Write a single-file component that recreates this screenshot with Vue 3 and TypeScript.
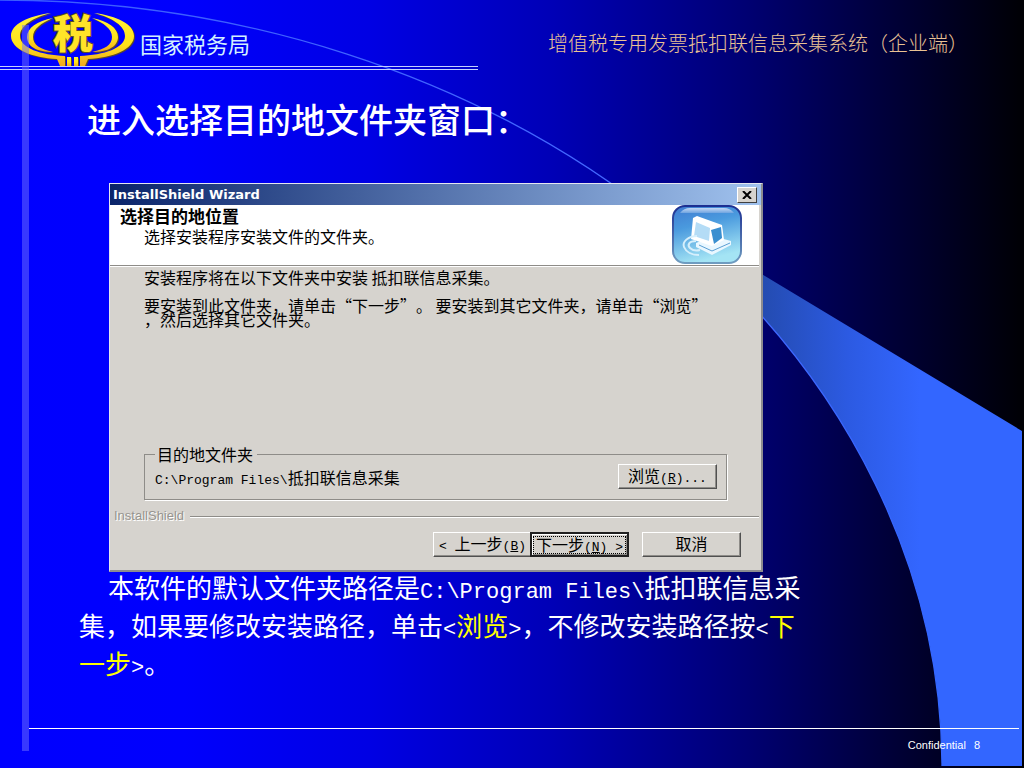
<script setup lang="ts">
import { ref } from 'vue'

const folder = ref({ drive: 'C:\\Program Files\\', name: '抵扣联信息采集' })
const page = 8
</script>

<template>
  <div class="slide" lang="zh-CN">
    <svg class="backdrop" viewBox="0 0 1024 768" preserveAspectRatio="none" aria-hidden="true">
      <defs>
        <linearGradient id="wedge" gradientUnits="userSpaceOnUse" x1="740" y1="0" x2="920" y2="0">
          <stop offset="0" stop-color="#2248a4" />
          <stop offset="0.6" stop-color="#2c5ae2" />
          <stop offset="1" stop-color="#3366ff" />
        </linearGradient>
        <linearGradient id="arc" gradientUnits="userSpaceOnUse" x1="0" y1="0" x2="942" y2="0">
          <stop offset="0" stop-color="#3a5cff" />
          <stop offset="0.7" stop-color="#4468ff" />
          <stop offset="1" stop-color="#3366ff" />
        </linearGradient>
      </defs>
      <path d="M700 237 L1022 431 V766 H942 A942 768 0 0 0 700 254 Z" fill="url(#wedge)" />
      <path d="M0 0 A942 768 0 0 1 942 766" fill="none" stroke="url(#arc)" stroke-width="1.3" />
    </svg>

    <header class="top">
      <svg class="logo" viewBox="0 0 126 58" role="img" aria-label="税务徽标">
        <defs>
          <linearGradient id="gold" x1="0" y1="0" x2="0" y2="1">
            <stop offset="0" stop-color="#fff23c" />
            <stop offset="0.6" stop-color="#ffe21a" />
            <stop offset="1" stop-color="#f0a820" />
          </linearGradient>
          <g id="half">
            <path d="M41 4 C18 7 1 15 1 27 C1 40 22 49 47 50 L50 57 H55 V47 C31 46 10 39 10 27 C10 17 22 9 41 4 Z" />
            <path d="M43 9 C27 12 17 19 17 28 C17 38 28 43 43 43 C30 40 23 36 23 28 C23 20 31 14 43 9 Z" />
            <path d="M57 48 H61 V57 H57 Z" />
          </g>
        </defs>
        <g fill="#5d4a28" transform="translate(1 1)">
          <use href="#half" />
          <use href="#half" transform="translate(125 0) scale(-1 1)" />
        </g>
        <g fill="url(#gold)">
          <use href="#half" />
          <use href="#half" transform="translate(125 0) scale(-1 1)" />
        </g>
        <text class="logo-char" x="63" y="39" text-anchor="middle">税</text>
      </svg>
      <span class="bureau">国家税务局</span>
      <span class="system">增值税专用发票抵扣联信息采集系统（企业端）</span>
    </header>
    <div class="rule"></div>
    <div class="stripe"></div>

    <main class="content">
      <h1>进入选择目的地文件夹窗口：</h1>

      <section class="dialog" aria-label="InstallShield Wizard">
        <div class="titlebar">
          <span>InstallShield Wizard</span>
          <button class="close" type="button" aria-label="关闭">
            <svg viewBox="0 0 10 8" aria-hidden="true"><path d="M1 0 L9 8 M9 0 L1 8" stroke="#000" stroke-width="2" /></svg>
          </button>
        </div>
        <div class="banner">
          <div>
            <h2>选择目的地位置</h2>
            <p>选择安装程序安装文件的文件夹。</p>
          </div>
          <svg class="setup" viewBox="0 0 70 60" aria-hidden="true">
            <defs>
              <linearGradient id="tile" x1="0" y1="0" x2="0.3" y2="1">
                <stop offset="0" stop-color="#3f7ad0" />
                <stop offset="0.4" stop-color="#4a9ade" />
                <stop offset="1" stop-color="#a4e4f4" />
              </linearGradient>
              <linearGradient id="edge" x1="0" y1="0" x2="0" y2="1">
                <stop offset="0" stop-color="#1c2f92" />
                <stop offset="1" stop-color="#6f9cc0" />
              </linearGradient>
              <linearGradient id="gloss" x1="0" y1="0" x2="0" y2="1">
                <stop offset="0" stop-color="#c4d8f4" />
                <stop offset="1" stop-color="#6fa4e0" />
              </linearGradient>
            </defs>
            <rect x="1" y="1" width="68" height="57" rx="12" fill="url(#tile)" stroke="url(#edge)" stroke-width="2" />
            <path d="M8 8 Q12 3 18 3 H52 Q58 3 62 8 Z" fill="url(#gloss)" />
            <path d="M24 38 L41 31 L59 36 V40 L40 50 L24 42 Z" fill="#e9f7ff" />
            <path d="M40 46 L58 38 M27 40 L40 46" stroke="#5a9fd4" stroke-width="1" fill="none" />
            <path d="M21 13 L25 11 L50 20 L52 35 L40 41 L19 34 Z" fill="#fff" />
            <path d="M24 17 L38 23 L37 36 L22 31 Z" fill="#b4dcf6" />
            <path d="M39 25 L49 22 L50 33 L42 39 Z" fill="#3a8fd0" />
            <path d="M25 31 C16 31 10 37 12 42 C14 47 20 50 27 50 M24 36 C17 36 15 40 18 43 C20 45 24 46 28 45" fill="none" stroke="#d6effc" stroke-width="2" />
          </svg>
        </div>
        <div class="body">
          <p class="lead">安装程序将在以下文件夹中安装 抵扣联信息采集。</p>
          <p class="explain">要安装到此文件夹，请单击“下一步”。 要安装到其它文件夹，请单击“浏览”<br />，然后选择其它文件夹。</p>
          <fieldset>
            <legend>目的地文件夹</legend>
            <div class="path"><span class="mono">{{ folder.drive }}</span>{{ folder.name }}</div>
            <button class="btn" type="button">浏览<span class="mono">(<u>R</u>)...</span></button>
          </fieldset>
          <div class="brand"><span>InstallShield</span><i></i></div>
          <div class="actions">
            <button class="btn" type="button"><span class="mono">&lt;&nbsp;</span>上一步<span class="mono">(<u>B</u>)</span></button>
            <button class="btn primary" type="button"><span class="focus">下一步<span class="mono">(<u>N</u>)&nbsp;&gt;</span></span></button>
            <button class="btn cancel" type="button">取消</button>
          </div>
        </div>
      </section>

      <p class="note">
        本软件的默认文件夹路径是<span class="code">{{ folder.drive }}</span>抵扣联信息采<br />集，如果要修改安装路径，单击<span class="code">&lt;</span><em>浏览</em><span class="code">&gt;</span>，不修改安装路径按<span class="code">&lt;</span><em>下<br />一步</em><span class="code">&gt;</span>。
      </p>
    </main>

    <footer>
      <span>Confidential</span>
      <span>{{ page }}</span>
    </footer>
  </div>
</template>

<style>
body {
  margin: 0;
  background: #000;
}
</style>

<style scoped>
.slide {
  position: relative;
  box-sizing: border-box;
  min-height: 100vh;
  display: flex;
  flex-direction: column;
  overflow: hidden;
  color: #fff;
  font-family: "Noto Sans CJK SC", "Liberation Sans", sans-serif;
  text-spacing-trim: space-all;
  background: linear-gradient(90deg, #0000ff 0%, #0000fd 18%, #0000e4 36%, #0000b6 54%, #000072 73%, #000038 87%, #000004 100%);
}
h1, h2, p, fieldset, legend {
  margin: 0;
  padding: 0;
  font-weight: 400;
}
.backdrop {
  position: absolute;
  inset: 0;
  width: 100%;
  height: 100%;
}
.top {
  position: relative;
  display: flex;
  align-items: center;
  box-sizing: border-box;
  height: 66px;
  padding: 20px 56px 0 10px;
}
.logo {
  width: 126px;
  height: 58px;
  margin-top: -10px;
  flex: none;
  overflow: visible;
}
.logo-char {
  font: 900 40px "Noto Sans CJK SC", sans-serif;
  fill: #ffe428;
  stroke: #5d4a28;
  stroke-width: 2;
  paint-order: stroke;
}
.bureau {
  margin-left: 4px;
  font-size: 22px;
  line-height: 30px;
  color: #d4f0ff;
}
.system {
  margin-left: auto;
  font-size: 20px;
  line-height: 30px;
  font-weight: 300;
  color: #eac294;
}
.rule {
  position: relative;
  width: 478px;
  height: 2px;
  border-top: 1px solid #c4d0ff;
  border-bottom: 1px solid #c4d0ff;
}
.stripe {
  position: absolute;
  left: 22px;
  top: 25px;
  bottom: 17px;
  width: 7px;
  background: rgba(112, 112, 255, 0.5);
}
.content {
  position: relative;
  padding-left: 79px;
}
h1 {
  margin: 25px 0 40px 8px;
  font-size: 34px;
  font-weight: 500;
  line-height: 48px;
}
.dialog {
  box-sizing: border-box;
  max-width: 654px;
  margin-left: 30px;
  border: 1px solid #e4e6f0;
  border-right: 2px solid #8c8c90;
  border-bottom: 2px solid #8c8c90;
  background: #d6d3ce;
  color: #000;
  font-size: 16px;
  line-height: 20px;
}
.titlebar {
  display: flex;
  align-items: center;
  justify-content: space-between;
  height: 21px;
  padding: 0 4px 0 3px;
  background: linear-gradient(90deg, #0a246a, #a0c2ee);
  color: #fff;
  font: bold 13px "DejaVu Sans", sans-serif;
}
.close {
  display: grid;
  place-items: center;
  width: 20px;
  height: 16px;
  padding: 0;
  border: 1px solid;
  border-color: #fff #404040 #404040 #fff;
  background: #d6d3ce;
}
.close svg {
  width: 10px;
  height: 8px;
}
.banner {
  display: flex;
  justify-content: space-between;
  height: 60px;
  padding: 0 17px 0 10px;
  margin-right: 2px;
  background: #fff;
  border-bottom: 1px solid #8e8c88;
  box-shadow: 0 1px #fff;
}
h2 {
  margin-top: 1px;
  font-size: 17px;
  font-weight: 700;
  line-height: 20px;
}
.banner p {
  margin-left: 24px;
}
.setup {
  width: 70px;
  height: 60px;
}
.body {
  padding: 1px 2px 13px 4px;
}
.lead {
  margin-left: 30px;
}
.explain {
  margin: 11px 0 0 30px;
  line-height: 14px;
  white-space: nowrap;
}
.mono {
  font-family: "Liberation Mono", monospace;
  font-size: 13px;
  line-height: 0;
}
fieldset {
  display: flex;
  align-items: center;
  justify-content: space-between;
  margin: 118px 32px 0 30px;
  padding: 0 9px 10px 10px;
  border: 1px solid #8e8c88;
  box-shadow: 1px 1px #fff;
  min-width: 0;
}
legend {
  padding: 0 4px 0 2px;
}
.btn {
  box-sizing: border-box;
  width: 99px;
  height: 25px;
  padding: 0 0 3px;
  border: 1px solid;
  border-color: #fff #505050 #505050 #fff;
  box-shadow: inset -1px -1px #8e8c88;
  background: #d6d3ce;
  color: #000;
  font-family: inherit;
  font-size: 16px;
  line-height: 20px;
  white-space: nowrap;
}
.brand {
  display: flex;
  align-items: center;
  gap: 6px;
  margin-top: 6px;
  color: #96948f;
  font: 13px/20px "Liberation Sans", sans-serif;
  text-shadow: 1px 1px #fff;
}
.brand i {
  flex: 1;
  height: 1px;
  background: #8e8c88;
  box-shadow: 0 1px #fff;
}
.actions {
  display: flex;
  justify-content: flex-end;
  margin: 6px 18px 0 0;
}
.primary {
  margin-left: -2px;
  padding: 0;
  border: 2px solid #202020;
  box-shadow: inset 1px 1px #fff, inset -1px -1px #8e8c88;
}
.focus {
  display: block;
  margin: 2px;
  outline: 1px dotted #000;
  padding-bottom: 2px;
  line-height: 14px;
}
.cancel {
  margin-left: 13px;
}
.note {
  margin-top: -4px;
  font-size: 26px;
  line-height: 38px;
  text-indent: 29px;
  white-space: nowrap;
}
.note .code {
  font-family: "Liberation Mono", monospace;
  font-size: 22px;
  line-height: 0;
}
.note em {
  font-style: normal;
  color: #ffff00;
}
footer {
  position: relative;
  display: flex;
  justify-content: flex-end;
  gap: 8px;
  box-sizing: border-box;
  height: 40px;
  margin: auto 5px 0 29px;
  padding: 8px 39px 0 0;
  border-top: 1px solid #fff;
  font: 11px/16px "Liberation Sans", sans-serif;
}
</style>
